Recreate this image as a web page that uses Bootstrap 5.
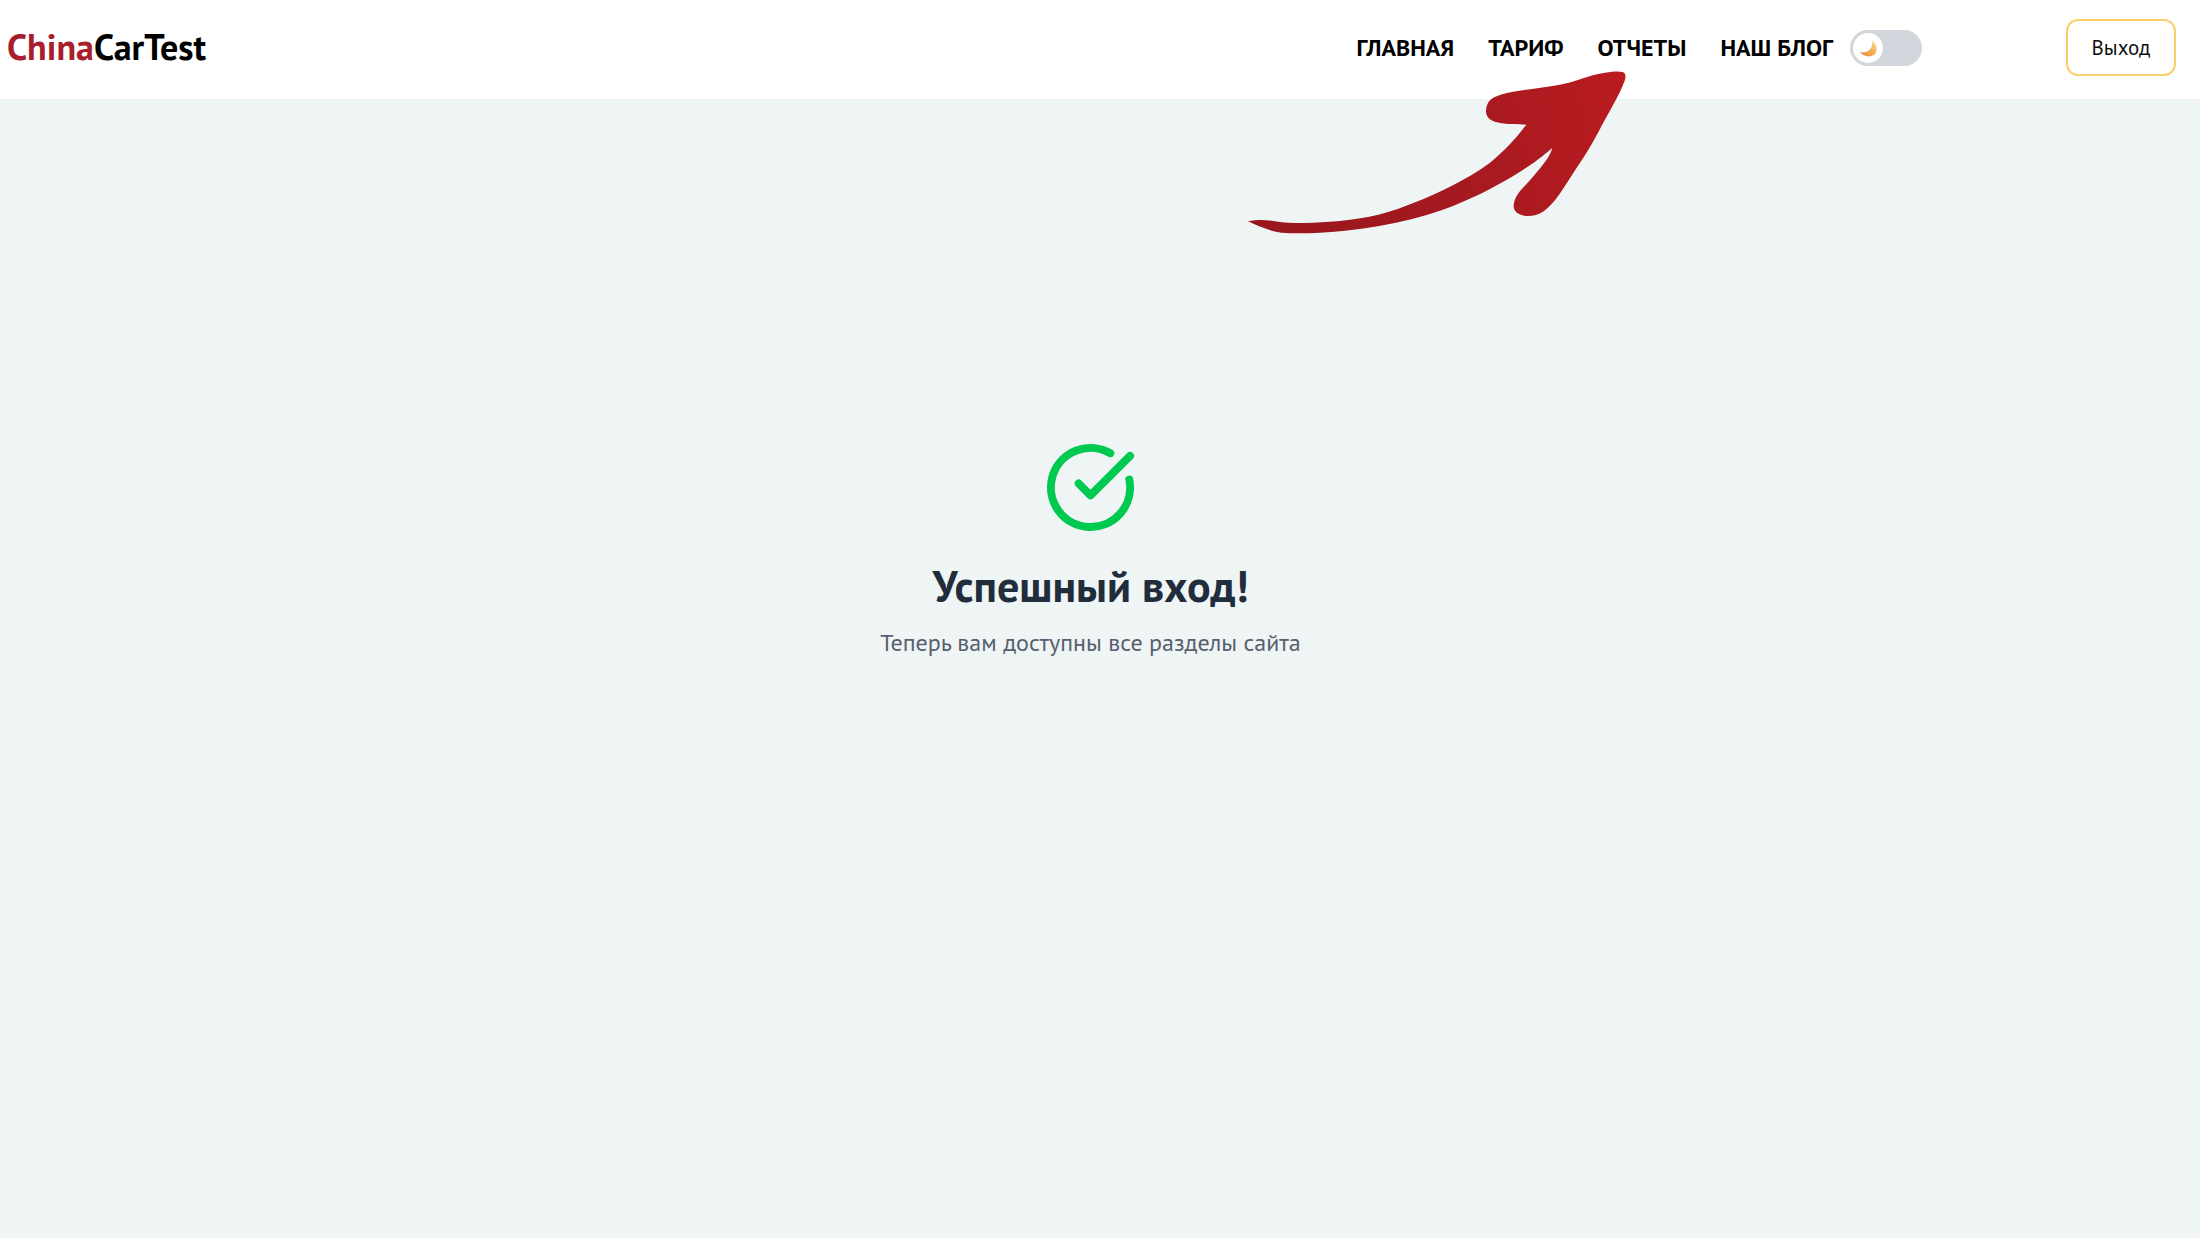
<!DOCTYPE html>
<html lang="ru">
<head>
<meta charset="utf-8">
<meta name="viewport" content="width=device-width, initial-scale=1">
<title>ChinaCarTest</title>
<link href="https://cdn.jsdelivr.net/npm/bootstrap@5.3.0/dist/css/bootstrap.min.css" rel="stylesheet">
<style>
body { font-family: "PT Sans", "Noto Sans", sans-serif; background: #eff5f5; color: #000; }
.site-header { padding: 19px 24px 23px 7px; background: #fff; }
.brand-name { font-size: 36px; line-height: 40px; padding-bottom: 2px; color: #000; }
.brand-accent { color: #a91e2c; }
.site-menu { gap: 34px; }
.menu-link { font-size: 24px; line-height: 32px; color: #000; }
.theme-toggle { position: relative; width: 72px; height: 36px; margin: 0 144px 0 17px; }
.theme-toggle input[type=checkbox] { width: 72px; height: 36px; margin: 0; border: 0; border-radius: 18px; background: #d1d5dc; background-image: none; cursor: pointer; }
.toggle-knob { position: absolute; left: 3px; top: 3px; width: 30px; height: 30px; border-radius: 50%; background: #fff; pointer-events: none; }
.exit-btn { width: 110px; height: 57px; padding: 0; border: 2px solid #f9d069; border-radius: 12px; font-size: 21px; color: #111; background: #fff; }
.hint-arrow { position: absolute; right: 550px; top: 60px; width: 420px; height: 190px; pointer-events: none; z-index: 2; }
.success-panel { padding: 341px 19px 40px 0; }
.success-title { font-size: 44px; line-height: 48px; margin: 27px 0 17px; color: #222d3c; }
.success-note { font-size: 24px; line-height: 32px; color: #56606e; }
</style>
</head>
<body>
<header class="site-header position-relative d-flex align-items-center">
  <a class="brand-name fw-bold text-decoration-none me-auto" href="#"><span class="brand-accent">China</span>CarTest</a>
  <nav aria-label="Основное меню">
    <ul class="site-menu list-unstyled d-flex mb-0">
      <li><a class="menu-link fw-bold text-decoration-none" href="#">ГЛАВНАЯ</a></li>
      <li><a class="menu-link fw-bold text-decoration-none" href="#">ТАРИФ</a></li>
      <li><a class="menu-link fw-bold text-decoration-none" href="#">ОТЧЕТЫ</a></li>
      <li><a class="menu-link fw-bold text-decoration-none" href="#">НАШ БЛОГ</a></li>
    </ul>
  </nav>
  <div class="theme-toggle">
    <input class="form-check-input d-block" type="checkbox" role="switch" aria-label="Тёмная тема">
    <span class="toggle-knob d-flex align-items-center justify-content-center">
      <svg width="20" height="20" viewBox="0 0 20 20" aria-hidden="true">
        <defs><linearGradient id="moon" x1="0" y1="1" x2="1" y2="0"><stop offset="0" stop-color="#e98a45"/><stop offset=".5" stop-color="#f3ab4e"/><stop offset="1" stop-color="#ffdf9a"/></linearGradient></defs>
        <path d="M14 3C19 6 20 12 17 16C13 20 5 19 2 13.500C5 15 9 14.500 11.500 12C14 9.500 14.500 6 14 3Z" fill="url(#moon)"/>
      </svg>
    </span>
  </div>
  <button class="btn exit-btn" type="button">Выход</button>
  <svg class="hint-arrow" viewBox="0 0 1260 570" aria-hidden="true">
    <defs><linearGradient id="arrowFill" gradientUnits="userSpaceOnUse" x1="54" y1="400" x2="1188" y2="150"><stop offset="0" stop-color="#98171d"/><stop offset=".55" stop-color="#a51a20"/><stop offset="1" stop-color="#b91b20"/></linearGradient></defs>
    <path fill="url(#arrowFill)" d="M54 484C85 477 112 479 150 486C180 490 215 489 250 488C350 484 430 472 505 446C610 408 710 360 780 308C826 272 862 230 889 194C865 192 840 195 815 190C782 185 767 173 768 152C770 125 782 113 812 104C865 89 920 87 985 75C1035 66 1080 44 1125 38C1150 34 1168 33 1178 36C1188 40 1188 50 1184 62C1168 105 1140 150 1115 197C1095 236 1080 262 1060 293C1025 345 996 396 967 430C942 458 921 469 892 468C865 467 849 453 851 435C855 400 885 380 905 355C937 318 960 290 967 264C938 289 912 309 875 332C790 385 715 422 630 452C520 490 385 512 270 518C230 520 190 521 155 518C115 513 82 496 54 484Z"/>
  </svg>
</header>
<main class="success-panel text-center">
  <svg class="d-block mx-auto" width="95" height="95" viewBox="0 0 24 24" fill="none" stroke="#00c950" stroke-width="2" stroke-linecap="round" stroke-linejoin="round" aria-hidden="true">
    <path d="M21.801 10A10 10 0 1 1 17 3.335"/><path d="m9 11 3 3L22 4"/>
  </svg>
  <h1 class="success-title fw-bold">Успешный вход!</h1>
  <p class="success-note mb-0">Теперь вам доступны все разделы сайта</p>
</main>
<script src="https://cdn.jsdelivr.net/npm/bootstrap@5.3.0/dist/js/bootstrap.bundle.min.js"></script>
</body>
</html>
